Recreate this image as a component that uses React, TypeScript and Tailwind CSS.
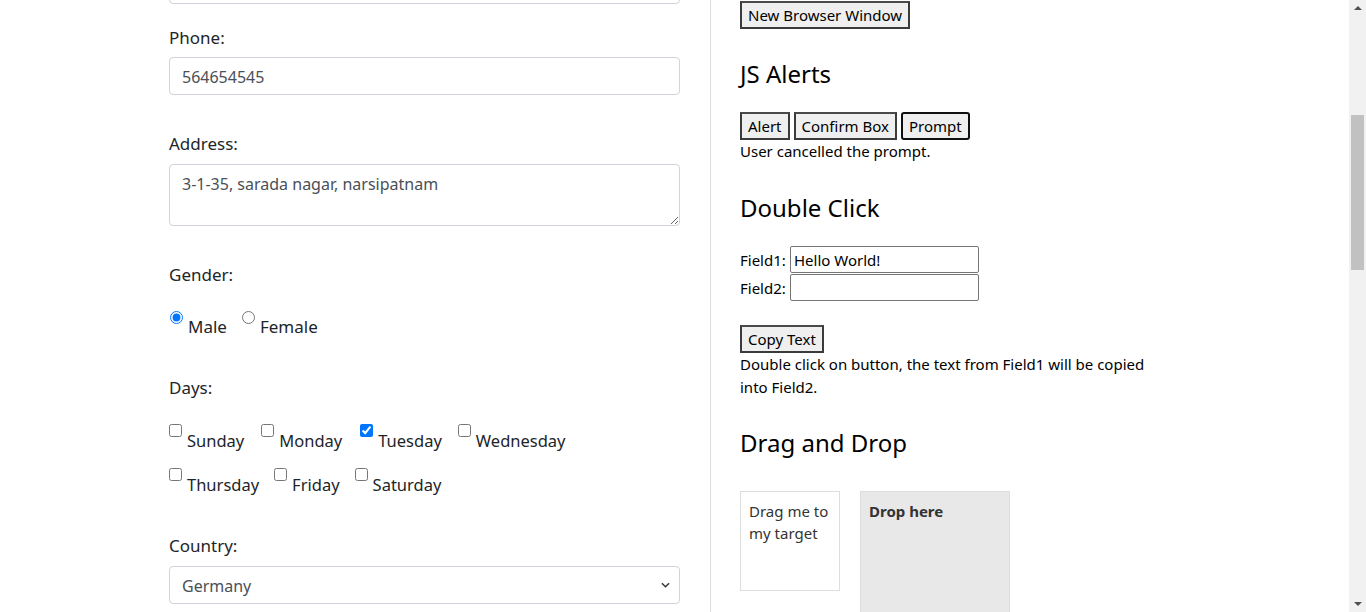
import React from "react";

const days1 = [
  { name: "Sunday", checked: false, gap: "mr-[17px]" },
  { name: "Monday", checked: false, gap: "mr-[18px]" },
  { name: "Tuesday", checked: true, gap: "mr-[16px]" },
  { name: "Wednesday", checked: false, gap: "" },
];
const days2 = [
  { name: "Thursday", checked: false, gap: "mr-[15px]" },
  { name: "Friday", checked: false, gap: "mr-[15px]" },
  { name: "Saturday", checked: false, gap: "" },
];

function DayRow({ items }: { items: { name: string; checked: boolean; gap: string }[] }) {
  return (
    <div className="flex items-start h-[44px]">
      {items.map((d) => (
        <label key={d.name} className={`flex items-start ${d.gap}`}>
          <input
            type="checkbox"
            defaultChecked={d.checked}
            className="w-[13px] h-[13px] m-0 mt-[1px] accent-[#0075ff]"
          />
          <span className="ml-[5px] mt-[6px] leading-6 text-[16.5px]">{d.name}</span>
        </label>
      ))}
    </div>
  );
}

function Btn({ children, rounded }: { children: React.ReactNode; rounded?: boolean }) {
  return (
    <button
      className={`h-[28px] px-[6px] bg-[#efefef] border-2 text-[15px] leading-none text-black ${
        rounded ? "rounded-[3px] border-[#101010]" : "border-[#3b3b3b] border-t-[#4a4a4a]"
      }`}
    >
      {children}
    </button>
  );
}

export default function App() {
  const font = "font-['Segoe_UI','Noto_Sans','Open_Sans',sans-serif]";
  return (
    <div className={`h-[612px] w-[1366px] overflow-hidden flex bg-white ${font}`}>
      {/* Left form */}
      <div className="w-[711px] shrink-0 border-r border-[#dedede] pl-[169px] pr-[30px] text-[#212529] text-[17px]">
        <input
          type="text"
          className="block w-full h-[38px] -mt-[34px] border border-[#ced4da] rounded-[4px]"
        />
        <div className="mt-[22px] leading-6">Phone:</div>
        <input
          type="text"
          defaultValue="564654545"
          className="block w-full h-[38px] mt-[7px] border border-[#ced4da] rounded-[4px] px-[12px] pt-[2px] text-[16px] text-[#495057] outline-none"
        />
        <div className="mt-[37px] leading-6">Address:</div>
        <textarea
          defaultValue="3-1-35, sarada nagar, narsipatnam"
          spellCheck
          className="block w-full h-[62px] mt-[8px] border border-[#ced4da] rounded-[4px] px-[12px] py-[7px] text-[16px] text-[#495057] leading-6 outline-none"
        />
        <div className="mt-[37px] leading-6">Gender:</div>
        <div className="flex items-start mt-[24px] h-[40px]">
          <label className="flex items-start">
            <input type="radio" name="g" defaultChecked className="w-[13px] h-[13px] m-0 ml-[1px] accent-[#0075ff]" />
            <span className="ml-[5px] mt-[4px] leading-6">Male</span>
          </label>
          <label className="flex items-start ml-[15px]">
            <input type="radio" name="g" className="w-[13px] h-[13px] m-0" />
            <span className="ml-[5px] mt-[4px] leading-6">Female</span>
          </label>
        </div>
        <div className="mt-[25px] leading-6">Days:</div>
        <div className="mt-[23px]">
          <DayRow items={days1} />
          <DayRow items={days2} />
        </div>
        <div className="mt-[23px] leading-6">Country:</div>
        <div className="relative mt-[8px]">
          <select
            defaultValue="Germany"
            className="block w-full h-[38px] border border-[#ced4da] rounded-[4px] px-[12px] pt-[2px] text-[16px] text-[#495057] bg-white appearance-none"
          >
            <option>Germany</option>
          </select>
          <svg
            viewBox="0 0 10 6"
            className="absolute right-[10px] top-[16px] w-[9px] h-[6px] pointer-events-none"
          >
            <path d="M1 1l4 4 4-4" fill="none" stroke="#333" strokeWidth="1.6" />
          </svg>
        </div>
      </div>

      {/* Right column */}
      <div className="flex-1 pl-[29px] text-black text-[15px]">
        <div className="mt-[1px]">
          <Btn>New Browser Window</Btn>
        </div>
        <h2 className="mt-[29px] text-[24px] leading-8">JS Alerts</h2>
        <div className="flex gap-[4px] mt-[22px]">
          <Btn>Alert</Btn>
          <Btn>Confirm Box</Btn>
          <Btn rounded>Prompt</Btn>
        </div>
        <p className="leading-[23px]">User cancelled the prompt.</p>
        <h2 className="mt-[29px] text-[24px] leading-8">Double Click</h2>
        <div className="mt-[22px]">
          <div className="flex items-center">
            <span className="w-[50px] pt-[2px]">Field1:</span>
            <input
              type="text"
              defaultValue="Hello World!"
              className="w-[189px] h-[27px] border border-[#767676] rounded-[2px] px-[3px] text-[15px] text-black"
            />
          </div>
          <div className="flex items-center mt-[1px]">
            <span className="w-[50px] pt-[2px]">Field2:</span>
            <input
              type="text"
              className="w-[189px] h-[27px] border border-[#767676] rounded-[2px] px-[3px] text-[15px]"
            />
          </div>
        </div>
        <div className="mt-[24px]">
          <Btn>Copy Text</Btn>
        </div>
        <p className="w-[420px] leading-[23px]">
          Double click on button, the text from Field1 will be copied into Field2.
        </p>
        <h2 className="mt-[28px] text-[24px] leading-8">Drag and Drop</h2>
        <div className="flex gap-[20px] mt-[32px]">
          <div className="w-[100px] h-[100px] border border-[#dddddd] px-[8px] py-[8px] text-[#333] leading-[22px]">
            Drag me to my target
          </div>
          <div className="w-[150px] h-[150px] border border-[#dddddd] bg-[#e8e8e8] px-[8px] py-[8px] text-[#333] font-bold leading-[22px]">
            Drop here
          </div>
        </div>
      </div>

      {/* Scrollbar */}
      <div className="w-[17px] shrink-0 bg-[#f1f1f1] flex flex-col items-center">
        <svg viewBox="0 0 8 4" className="w-[8px] h-[4px] mt-[6px]">
          <path d="M0 4L4 0L8 4Z" fill="#505050" />
        </svg>
        <div className="w-[13px] h-[155px] bg-[#c1c1c1] mt-[105px]" />
        <div className="flex-1" />
        <svg viewBox="0 0 8 4" className="w-[8px] h-[4px] mb-[6px]">
          <path d="M0 0L8 0L4 4Z" fill="#505050" />
        </svg>
      </div>
    </div>
  );
}
